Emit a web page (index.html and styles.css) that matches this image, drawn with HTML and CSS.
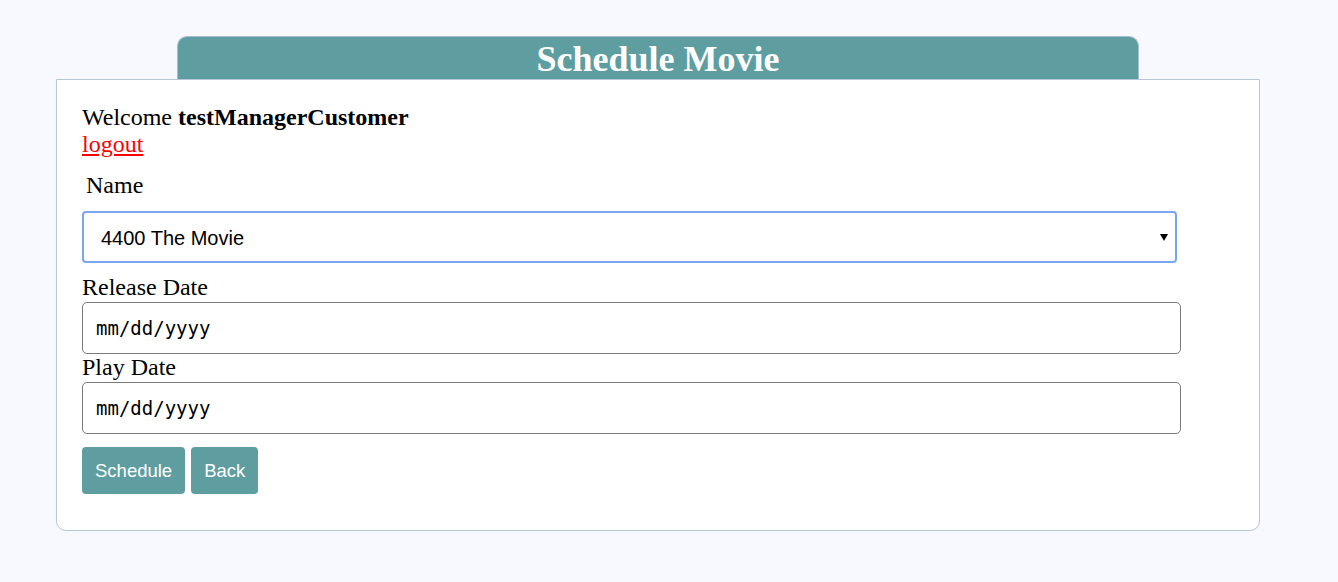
FILE: index.html
```html
<!DOCTYPE html>
<html>
<head>
<meta charset="utf-8">
<title>Schedule Movie</title>
<link rel="stylesheet" href="styles.css">
</head>
<body>
<div class="page">
  <div class="tab"><h1 class="title">Schedule Movie</h1></div>
  <div class="card">
    <div class="line">Welcome <b>testManagerCustomer</b></div>
    <div class="line"><a class="logout" href="#">logout</a></div>
    <label class="label label-name">Name</label>
    <div class="select-wrap">
      <select class="select">
        <option>4400 The Movie</option>
      </select>
    </div>
    <label class="label label-release">Release Date</label>
    <input class="date" type="text" value="mm/dd/yyyy">
    <label class="label">Play Date</label>
    <input class="date" type="text" value="mm/dd/yyyy">
    <div class="buttons">
      <button class="btn">Schedule</button>
      <button class="btn">Back</button>
    </div>
  </div>
</div>
</body>
</html>
```

FILE: styles.css
```css
html, body {
  margin: 0;
  padding: 0;
  background: #f8f8ff;
}
body {
  font-family: "Liberation Serif", "Times New Roman", serif;
  color: #000;
}
.page {
  width: 1204px;
  margin-left: 56px;
  padding-top: 36px;
  display: flex;
  flex-direction: column;
}
.tab {
  width: 962px;
  box-sizing: border-box;
  margin: 0 auto;
  background: #5f9ea0;
  border: 1px solid #a9bcd3;
  border-bottom: none;
  border-radius: 10px 10px 0 0;
  padding-top: 2px;
}
.title {
  margin: 0;
  color: #fff;
  font-size: 36px;
  line-height: 40px;
  font-weight: bold;
  text-align: center;
}
.card {
  box-sizing: border-box;
  background: #fff;
  border: 1px solid #b7c6d9;
  border-radius: 0 0 10px 10px;
  padding: 24px 25px 36px 25px;
  display: flex;
  flex-direction: column;
  align-items: flex-start;
  font-size: 24px;
  line-height: 27px;
}
.line {
  display: block;
}
.logout {
  color: #f00;
  text-decoration: underline;
}
.label {
  display: block;
  font-size: 24px;
  line-height: 27px;
}
.label-name {
  margin-top: 14px;
  padding-left: 4px;
}
.label-release {
  margin-top: 11px;
}
.select-wrap {
  position: relative;
  margin-top: 12px;
}
.select-wrap::after {
  content: "";
  position: absolute;
  right: 9px;
  top: 23px;
  border-left: 4px solid transparent;
  border-right: 4px solid transparent;
  border-top: 7px solid #000;
  pointer-events: none;
}
.select {
  -webkit-appearance: none;
  appearance: none;
  box-sizing: border-box;
  width: 1095px;
  height: 52px;
  padding: 2px 30px 0 17px;
  border: 2px solid #79a6ee;
  border-radius: 4px;
  background: #fff;
  font-family: "Liberation Sans", Arial, sans-serif;
  font-size: 20px;
  color: #000;
  outline: none;
}
.date {
  box-sizing: border-box;
  width: 1099px;
  height: 52px;
  margin-top: 1px;
  padding: 0 13px;
  border: 1px solid #7a7a7a;
  border-radius: 5px;
  background: #fff;
  font-family: "DejaVu Sans Mono", monospace;
  font-size: 19px;
  color: #000;
  outline: none;
}
.buttons {
  display: flex;
  gap: 6px;
  margin-top: 13px;
}
.btn {
  height: 47px;
  padding: 0 13px;
  border: none;
  border-radius: 4px;
  background: #5f9ea0;
  color: #fff;
  font-family: "Liberation Sans", Arial, sans-serif;
  font-size: 18.5px;
}
```
